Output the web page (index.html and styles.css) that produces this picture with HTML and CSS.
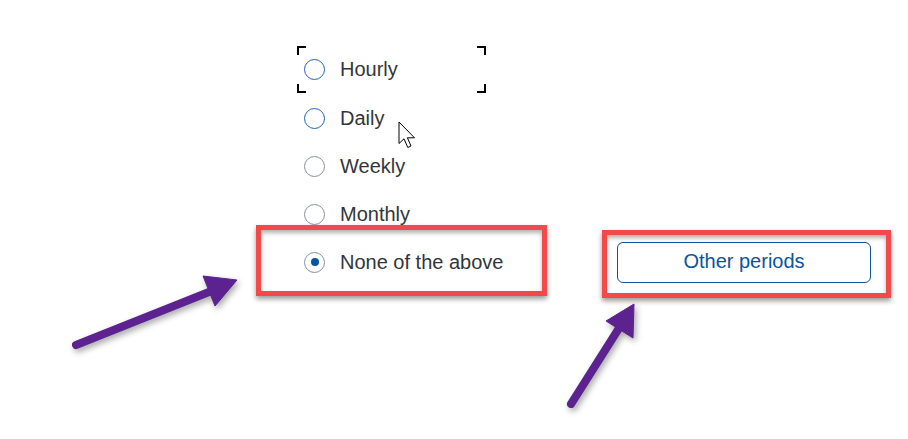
FILE: index.html
```html
<!DOCTYPE html>
<html lang="en">
<head>
<meta charset="utf-8">
<title>Periods</title>
<link rel="stylesheet" href="styles.css">
</head>
<body>
<div class="page">
  <div class="group">
    <div class="opt focus"><span class="radio hover"></span><span class="label">Hourly</span></div>
    <div class="opt"><span class="radio hover"></span><span class="label">Daily</span></div>
    <div class="opt"><span class="radio"></span><span class="label">Weekly</span></div>
    <div class="opt"><span class="radio"></span><span class="label">Monthly</span></div>
    <div class="lastrow">
      <div class="opt annot annot-a"><span class="radio checked"></span><span class="label">None of the above</span></div>
      <div class="btnwrap annot annot-b"><button class="btn" type="button">Other periods</button></div>
    </div>
  </div>
  <svg class="cursor" width="20" height="28" viewBox="0 0 20 28">
    <path d="M1 1 L1 22.5 L6 17.8 L9.8 26.5 L13 25 L9.4 16.8 L16.5 16.8 Z" fill="#fff" stroke="#000" stroke-width="1" stroke-linejoin="miter"/>
  </svg>
  <svg class="arrows" width="908" height="439" viewBox="0 0 908 439">
    <g fill="#5c2290" stroke="#5c2290">
      <line x1="76" y1="345" x2="214" y2="290" stroke-width="8" stroke-linecap="round"/>
      <polygon points="237,280 203,276 215,306" stroke-width="1" stroke-linejoin="round"/>
      <line x1="571" y1="404" x2="621" y2="325" stroke-width="8" stroke-linecap="round"/>
      <polygon points="634,304 606,321 633,338" stroke-width="1" stroke-linejoin="round"/>
    </g>
  </svg>
</div>
</body>
</html>
```

FILE: styles.css
```css
html, body {
  margin: 0;
  padding: 0;
  background: #ffffff;
}

.page {
  position: relative;
  width: 908px;
  height: 439px;
  box-sizing: border-box;
  padding: 46px 0 0 297px;
  font-family: "Liberation Sans", Arial, sans-serif;
  font-size: 20px;
  color: #32363a;
  overflow: hidden;
}

.group {
  display: flex;
  flex-direction: column;
}

.opt {
  position: relative;
  display: flex;
  align-items: center;
  gap: 15px;
  width: 189px;
  height: 48px;
  box-sizing: border-box;
  padding-left: 7px;
  white-space: nowrap;
}

.label {
  line-height: 24px;
  padding-bottom: 1px;
}

.radio {
  position: relative;
  flex: none;
  width: 21px;
  height: 21px;
  box-sizing: border-box;
  border: 1px solid #89919a;
  border-radius: 50%;
  background: #fff;
}

.radio.hover {
  border-color: #1f62c4;
}

.radio.checked::after {
  content: "";
  position: absolute;
  left: 50%;
  top: 50%;
  width: 8px;
  height: 8px;
  margin: -4px 0 0 -4px;
  border-radius: 50%;
  background: #0854a0;
}

.focus {
  background:
    linear-gradient(#000, #000) left top / 9px 2px no-repeat,
    linear-gradient(#000, #000) left top / 2px 9px no-repeat,
    linear-gradient(#000, #000) right top / 9px 2px no-repeat,
    linear-gradient(#000, #000) right top / 2px 9px no-repeat,
    linear-gradient(#000, #000) left bottom / 9px 2px no-repeat,
    linear-gradient(#000, #000) left bottom / 2px 9px no-repeat,
    linear-gradient(#000, #000) right bottom / 9px 2px no-repeat,
    linear-gradient(#000, #000) right bottom / 2px 9px no-repeat;
  height: 47px;
  margin-bottom: 1px;
}

.lastrow {
  display: flex;
  align-items: center;
  height: 48px;
}

.btnwrap {
  position: relative;
  margin-left: 131px;
  display: flex;
}

.btn {
  width: 254px;
  height: 41px;
  box-sizing: border-box;
  border: 1px solid #0854a0;
  border-radius: 6px;
  background: #ffffff;
  color: #0854a0;
  font-family: "Liberation Sans", Arial, sans-serif;
  font-size: 20px;
  padding: 0 0 1px;
  margin: 0;
}

.annot::after {
  content: "";
  position: absolute;
  border: 5px solid #f24a4b;
  box-shadow: 0 3px 5px rgba(0, 0, 0, 0.4), inset 0 3px 4px rgba(0, 0, 0, 0.3);
  pointer-events: none;
}

.annot-a::after {
  top: -13px;
  right: -61px;
  bottom: -10px;
  left: -41px;
}

.annot-b::after {
  top: -12px;
  right: -20px;
  bottom: -15px;
  left: -15px;
}

.cursor {
  position: absolute;
  left: 398px;
  top: 121px;
}

.arrows {
  position: absolute;
  left: 0;
  top: 0;
  pointer-events: none;
  filter: drop-shadow(2px 3px 3px rgba(0, 0, 0, 0.35));
}
```
